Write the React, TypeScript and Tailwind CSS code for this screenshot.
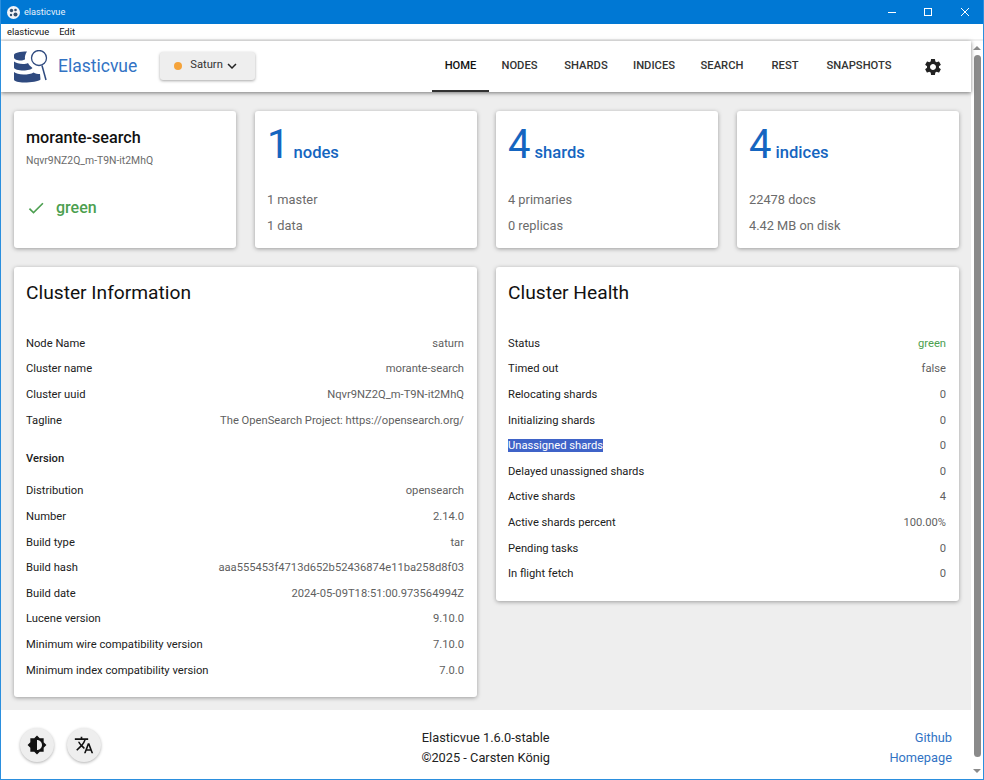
import { MdBrightness6, MdCheck, MdKeyboardArrowDown, MdSettings, MdTranslate } from 'react-icons/md'

const clusterInfo = [
  ['Node Name', 'saturn'],
  ['Cluster name', 'morante-search'],
  ['Cluster uuid', 'Nqvr9NZ2Q_m-T9N-it2MhQ'],
  ['Tagline', 'The OpenSearch Project: https://opensearch.org/'],
]

const versionInfo = [
  ['Distribution', 'opensearch'],
  ['Number', '2.14.0'],
  ['Build type', 'tar'],
  ['Build hash', 'aaa555453f4713d652b52436874e11ba258d8f03'],
  ['Build date', '2024-05-09T18:51:00.973564994Z'],
  ['Lucene version', '9.10.0'],
  ['Minimum wire compatibility version', '7.10.0'],
  ['Minimum index compatibility version', '7.0.0'],
]

const healthInfo = [
  ['Status', 'green'],
  ['Timed out', 'false'],
  ['Relocating shards', '0'],
  ['Initializing shards', '0'],
  ['Unassigned shards', '0'],
  ['Delayed unassigned shards', '0'],
  ['Active shards', '4'],
  ['Active shards percent', '100.00%'],
  ['Pending tasks', '0'],
  ['In flight fetch', '0'],
]

const tabs = [
  { name: 'HOME', className: 'w-[57px] border-b-2 border-[#333] pt-[2px] text-[#111]' },
  { name: 'NODES', className: 'ml-[12px] w-[37px]' },
  { name: 'SHARDS', className: 'ml-[26px] w-[44px]' },
  { name: 'INDICES', className: 'ml-[24px] w-[44px]' },
  { name: 'SEARCH', className: 'ml-[24px] w-[44px]' },
  { name: 'REST', className: 'ml-[27px] w-[28px]' },
  { name: 'SNAPSHOTS', className: 'ml-[27px] w-[66px]' },
]

function Row({ label, value }: { label: string; value: string }) {
  return (
    <div className="flex h-[25.6px] items-center justify-between text-[11.2px]">
      <span className="text-[#212121]">
        {label === 'Unassigned shards' ? <span className="bg-[#3f63c8] text-white">{label}</span> : label}
      </span>
      <span className={value === 'green' ? 'text-[#4c9f50]' : 'text-[#5f5f5f]'}>{value}</span>
    </div>
  )
}

function StatCard({ count, unit, lines }: { count: string; unit: string; lines: string[] }) {
  return (
    <div className="h-[137px] w-[222px] rounded-[3px] bg-white pt-[13px] pr-[13px] pl-[12px] shadow-[0_1px_4px_rgba(0,0,0,0.35)]">
      <div className="flex h-[41px] items-end">
        <span className="text-[40px] leading-[41px] text-[#1565c0]">{count}</span>
        <span className="ml-[4px] text-[16.6px] leading-[24px] font-medium text-[#1565c0]">{unit}</span>
      </div>
      <div className="mt-[22px] text-[12.8px] text-[#6b6b6b]">
        {lines.map((line) => (
          <div key={line} className="flex h-[26px] items-center">{line}</div>
        ))}
      </div>
    </div>
  )
}

function Logo() {
  return (
    <svg width="36" height="34" viewBox="0 0 36 34" className="shrink-0">
      <g fill="#2f4a7f">
        <path d="M1 5c0-2 6-3.500 13-3.500-1.500 2-2.500 5-2 8-1 .5-3 1-4.500 1-3 0-6.500-1-6.500-3z" />
        <path d="M1 11.500c2 1.500 5 2.500 9 2.500 2 0 4-.3 5-1 1 2 2.500 3.500 4.500 5-1 1.500-5 2.500-9 2.500-5 0-9.500-1-9.500-3z" />
        <path d="M1 22c2 1.500 5 2.500 9.500 2.500 4 0 8-.5 10-2 2 1 4 1.500 6.500 1.500l.5 5.500c-2 2-9 3-16.500 3-5 0-10-1-10-3z" />
      </g>
      <circle cx="26" cy="8" r="7.500" fill="none" stroke="#2f4a7f" strokeWidth="1.300" />
      <path d="M29 15.500l4 14.500" stroke="#2f4a7f" strokeWidth="1.500" />
    </svg>
  )
}

export default function App() {
  return (
    <div className="flex h-[780px] w-[984px] flex-col overflow-hidden border-x border-b border-[#2b8fde] bg-white font-['Roboto',sans-serif]">
      {/* Title bar */}
      <div className="-mx-px flex h-[24px] shrink-0 items-center bg-[#0078d4] pl-[7px] text-white">
        <svg width="13" height="13" viewBox="0 0 13 13">
          <circle cx="6.500" cy="6.500" r="6.500" fill="#f1f4f8" />
          <circle cx="4.500" cy="4.500" r="1.700" fill="#34506f" />
          <circle cx="8.500" cy="4" r="1.300" fill="#34506f" />
          <circle cx="8.500" cy="8.500" r="2" fill="#34506f" />
          <circle cx="4" cy="9" r="1.200" fill="#34506f" />
        </svg>
        <span className="ml-[4px] text-[9.2px] text-[#e6f1fb]">elasticvue</span>
        <div className="ml-auto flex h-full items-center">
          <svg width="10" height="10" viewBox="0 0 10 10" className="mr-[26px]">
            <path d="M1 5.500h8" stroke="#fff" strokeWidth="1" />
          </svg>
          <svg width="10" height="10" viewBox="0 0 10 10" className="mr-[27px]">
            <rect x="1.500" y="1.500" width="7" height="7" fill="none" stroke="#fff" strokeWidth="1" />
          </svg>
          <svg width="10" height="10" viewBox="0 0 10 10" className="mr-[14px]">
            <path d="M1 1l8 8M9 1l-8 8" stroke="#fff" strokeWidth="1" />
          </svg>
        </div>
      </div>

      {/* Menu bar */}
      <div className="flex h-[17px] shrink-0 items-center gap-[10px] border-b-2 border-[#f0f0f0] pt-[1px] pl-[6px] text-[9.4px] text-[#111]">
        <span>elasticvue</span>
        <span>Edit</span>
      </div>

      <div className="flex min-h-0 flex-1">
        <div className="flex min-w-0 flex-1 flex-col bg-[#eeeeee]">
          {/* Nav */}
          <header className="z-10 flex h-[51px] shrink-0 items-center bg-white pl-[12px] shadow-[0_1px_4px_rgba(0,0,0,0.5)]">
            <Logo />
            <span className="ml-[9px] text-[17.5px] text-[#3273c4]">Elasticvue</span>
            <button className="mb-[2px] ml-[23px] flex h-[28px] w-[95px] items-center rounded-[3px] bg-[#eeeeee] pl-[14px] text-[11.2px] text-[#333] shadow-[0_1px_3px_rgba(0,0,0,0.35)]">
              <span className="h-[8px] w-[8px] rounded-full bg-[#f5a33a]" />
              <span className="ml-[8px]">Saturn</span>
              <MdKeyboardArrowDown className="text-[18px] text-[#222]" />
            </button>
            <nav className="ml-auto flex h-full items-center text-[11.2px] font-medium text-[#333]">
              {tabs.map((tab) => (
                <div key={tab.name} className={'flex h-full items-center justify-center ' + tab.className}>
                  {tab.name}
                </div>
              ))}
              <MdSettings className="mr-[28px] ml-[31px] text-[20px] text-[#222]" />
            </nav>
          </header>

          {/* Content */}
          <main className="flex min-h-0 flex-1 flex-col pt-[19px] pr-[12px] pl-[13px]">
            <div className="flex gap-[19px]">
              <div className="h-[137px] w-[222px] rounded-[3px] bg-white pt-[15px] pr-[13px] pl-[12px] shadow-[0_1px_4px_rgba(0,0,0,0.35)]">
                <div className="text-[16.2px] leading-[24px] font-medium text-[#111]">morante-search</div>
                <div className="mt-[3px] text-[10.4px] text-[#6b6b6b]">Nqvr9NZ2Q_m-T9N-it2MhQ</div>
                <div className="mt-[27px] flex items-center">
                  <MdCheck className="text-[20px] text-[#4c9f50]" />
                  <span className="ml-[10px] text-[16px] font-medium text-[#4c9f50]">green</span>
                </div>
              </div>
              <StatCard count="1" unit="nodes" lines={['1 master', '1 data']} />
              <StatCard count="4" unit="shards" lines={['4 primaries', '0 replicas']} />
              <StatCard count="4" unit="indices" lines={['22478 docs', '4.42 MB on disk']} />
            </div>

            <div className="mt-[19px] flex items-start gap-[19px]">
              <section className="h-[430px] w-[463px] rounded-[3px] bg-white pt-[13px] pr-[13px] pl-[12px] shadow-[0_1px_4px_rgba(0,0,0,0.35)]">
                <h2 className="text-[19.2px] leading-[26px] text-[#111]">Cluster Information</h2>
                <div className="mt-[25.5px]">
                  {clusterInfo.map(([label, value]) => (
                    <Row key={label} label={label} value={value} />
                  ))}
                </div>
                <div className="mt-[12.5px] mb-[7px] h-[25.6px] text-[11.2px] leading-[25.6px] font-medium text-[#212121]">Version</div>
                {versionInfo.map(([label, value]) => (
                  <Row key={label} label={label} value={value} />
                ))}
              </section>
              <section className="h-[334px] w-[463px] rounded-[3px] bg-white pt-[13px] pr-[13px] pl-[12px] shadow-[0_1px_4px_rgba(0,0,0,0.35)]">
                <h2 className="text-[19.2px] leading-[26px] text-[#111]">Cluster Health</h2>
                <div className="mt-[25.5px]">
                  {healthInfo.map(([label, value]) => (
                    <Row key={label} label={label} value={value} />
                  ))}
                </div>
              </section>
            </div>
          </main>

          {/* Footer */}
          <footer className="flex h-[69px] shrink-0 items-center bg-white pr-[19px] pl-[19px]">
            <div className="flex gap-[13px]">
              <div className="flex h-[34px] w-[34px] items-center justify-center rounded-full bg-[#eeeeee] shadow-[0_1px_3px_rgba(0,0,0,0.3)]">
                <MdBrightness6 className="text-[20px] text-[#111]" />
              </div>
              <div className="flex h-[34px] w-[34px] items-center justify-center rounded-full bg-[#eeeeee] shadow-[0_1px_3px_rgba(0,0,0,0.3)]">
                <MdTranslate className="text-[20px] text-[#111]" />
              </div>
            </div>
            <div className="flex-1 pt-[6px] pr-[19px] text-center text-[12.8px] leading-[20px] text-[#222]">
              <div>Elasticvue 1.6.0-stable</div>
              <div>©2025 - Carsten König</div>
            </div>
            <div className="pt-[6px] text-right text-[12.8px] leading-[20px] text-[#3273c4]">
              <div>Github</div>
              <div>Homepage</div>
            </div>
          </footer>
        </div>

        {/* Scrollbar */}
        <div className="flex w-[12px] shrink-0 flex-col items-center bg-white">
          <div className="mt-[5px] h-0 w-0 border-x-[4px] border-b-[4px] border-x-transparent border-b-[#8a8a8a]" />
          <div className="mt-[5px] h-[702px] w-[7px] rounded-full bg-[#8a8a8a]" />
          <div className="mt-auto mb-[6px] h-0 w-0 border-x-[4px] border-t-[4px] border-x-transparent border-t-[#8a8a8a]" />
        </div>
      </div>
    </div>
  )
}
